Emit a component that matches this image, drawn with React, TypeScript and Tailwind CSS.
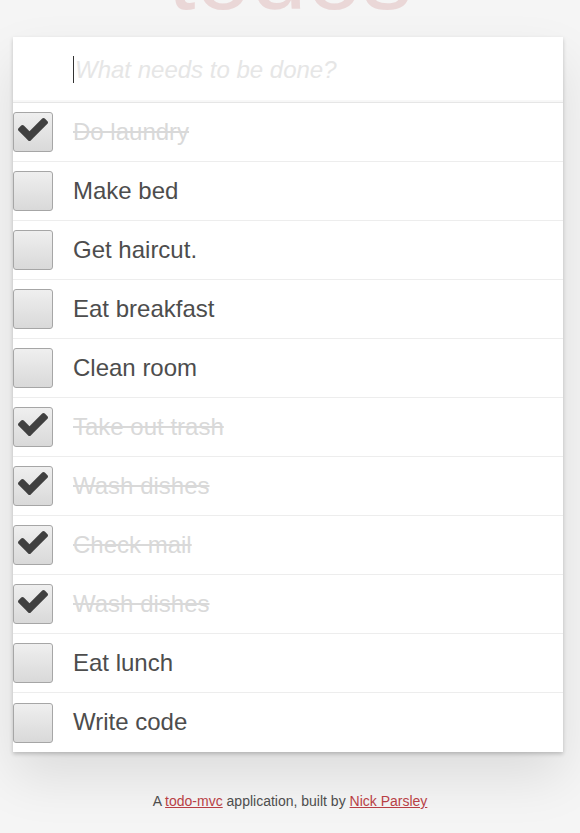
import React from 'react';

interface Todo {
  id: number;
  title: string;
  done: boolean;
}

const todos: Todo[] = [
  { id: 1, title: 'Do laundry', done: true },
  { id: 2, title: 'Make bed', done: false },
  { id: 3, title: 'Get haircut.', done: false },
  { id: 4, title: 'Eat breakfast', done: false },
  { id: 5, title: 'Clean room', done: false },
  { id: 6, title: 'Take out trash', done: true },
  { id: 7, title: 'Wash dishes', done: true },
  { id: 8, title: 'Check mail', done: true },
  { id: 9, title: 'Wash dishes', done: true },
  { id: 10, title: 'Eat lunch', done: false },
  { id: 11, title: 'Write code', done: false },
];

function CheckBox({ checked }: { checked: boolean }) {
  return (
    <div className="relative w-10 h-10 shrink-0 rounded-[3px] border border-[#a6a6a6] bg-gradient-to-b from-[#efefef] to-[#d9d9d9]">
      {checked && (
        <svg
          className="absolute left-[4px] top-[5px]"
          width="30"
          height="23"
          viewBox="121 334 1550 1188"
        >
          <path
            fill="#404040"
            d="M1671 566q0 40-28 68l-724 724-136 136q-28 28-68 28t-68-28l-136-136-362-362q-28-28-28-68t28-68l136-136q28-28 68-28t68 28l294 295 656-657q28-28 68-28t68 28l136 136q28 28 28 68z"
          />
        </svg>
      )}
    </div>
  );
}

export default function App() {
  return (
    <div className="min-h-[833px] bg-[#f5f5f5] overflow-hidden font-['Liberation_Sans',Arial,sans-serif] text-[#4d4d4d]">
      {/* title - mostly scrolled off the top */}
      <h1 className="-mt-[76px] h-[100px] text-center text-[100px] leading-none font-thin text-[rgba(175,47,47,0.15)] select-none">
        todos
      </h1>

      <section className="ml-[13px] mt-[13px] w-[550px] bg-white shadow-[0_2px_4px_0_rgba(0,0,0,0.2),0_25px_50px_0_rgba(0,0,0,0.1)]">
        {/* new todo input */}
        <div className="h-[66px] flex items-center pl-[60px] border-b border-[#e6e6e6] shadow-[inset_0_-2px_1px_rgba(0,0,0,0.03)]">
          <span className="w-px h-[27px] bg-[#333]" />
          <span className="text-[24px] italic text-[#e6e6e6] ml-px">What needs to be done?</span>
        </div>

        <ul>
          {todos.map((todo, i) => (
            <li
              key={todo.id}
              className={`h-[59px] flex items-center ${i < todos.length - 1 ? 'border-b border-[#ededed]' : ''}`}
            >
              <CheckBox checked={todo.done} />
              <span
                className={`ml-[20px] text-[24px] leading-[1.2] ${
                  todo.done ? 'line-through text-[#d9d9d9]' : 'text-[#4d4d4d]'
                }`}
              >
                {todo.title}
              </span>
            </li>
          ))}
        </ul>
      </section>

      <footer className="mt-[39px] text-center text-[14px] leading-[21px] text-[#4d4d4d]">
        A <a href="#" className="text-[#b83f45] underline">todo-mvc</a> application, built by{' '}
        <a href="#" className="text-[#b83f45] underline">Nick Parsley</a>
      </footer>
    </div>
  );
}
